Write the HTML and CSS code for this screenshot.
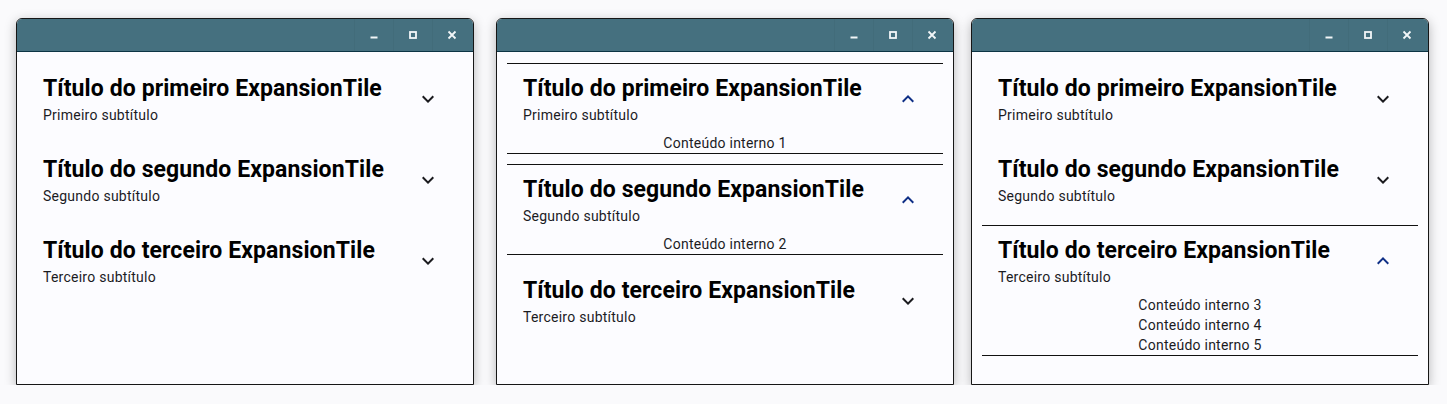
FILE: index.html
```html
<!DOCTYPE html>
<html>
<head>
    <title>ExpansionTile</title>
    <link rel="stylesheet" href="styles.css">
</head>
<body>
    <div class="desk">
        <!-- screen 1: all tiles closed -->
        <div class="window">
            <div class="titlebar">
                <span class="ctl"><svg viewBox="0 0 10 10"><path d="M1.5 7.5h7"/></svg></span>
                <span class="ctl"><svg viewBox="0 0 10 10"><rect x="2" y="2" width="6" height="6"/></svg></span>
                <span class="ctl"><svg viewBox="0 0 10 10"><path d="M1.5 1.5l7 7M8.5 1.5l-7 7"/></svg></span>
            </div>
            <div class="list">
                <div class="tile">
                    <div class="tile-head">
                        <div class="tile-text">
                            <p class="tile-title">Título do primeiro ExpansionTile</p>
                            <p class="tile-sub">Primeiro subtítulo</p>
                        </div>
                        <svg class="chev" viewBox="0 0 24 24"><path d="M16.59 8.59L12 13.17 7.41 8.59 6 10l6 6 6-6z"/></svg>
                    </div>
                </div>
                <div class="tile">
                    <div class="tile-head">
                        <div class="tile-text">
                            <p class="tile-title">Título do segundo ExpansionTile</p>
                            <p class="tile-sub">Segundo subtítulo</p>
                        </div>
                        <svg class="chev" viewBox="0 0 24 24"><path d="M16.59 8.59L12 13.17 7.41 8.59 6 10l6 6 6-6z"/></svg>
                    </div>
                </div>
                <div class="tile">
                    <div class="tile-head">
                        <div class="tile-text">
                            <p class="tile-title">Título do terceiro ExpansionTile</p>
                            <p class="tile-sub">Terceiro subtítulo</p>
                        </div>
                        <svg class="chev" viewBox="0 0 24 24"><path d="M16.59 8.59L12 13.17 7.41 8.59 6 10l6 6 6-6z"/></svg>
                    </div>
                </div>
            </div>
        </div>

        <!-- screen 2: first and second open -->
        <div class="window">
            <div class="titlebar">
                <span class="ctl"><svg viewBox="0 0 10 10"><path d="M1.5 7.5h7"/></svg></span>
                <span class="ctl"><svg viewBox="0 0 10 10"><rect x="2" y="2" width="6" height="6"/></svg></span>
                <span class="ctl"><svg viewBox="0 0 10 10"><path d="M1.5 1.5l7 7M8.5 1.5l-7 7"/></svg></span>
            </div>
            <div class="list">
                <div class="tile open">
                    <div class="tile-head">
                        <div class="tile-text">
                            <p class="tile-title">Título do primeiro ExpansionTile</p>
                            <p class="tile-sub">Primeiro subtítulo</p>
                        </div>
                        <svg class="chev" viewBox="0 0 24 24"><path d="M7.41 15.41L12 10.83l4.59 4.58L18 14l-6-6-6 6z"/></svg>
                    </div>
                    <div class="tile-body">
                        <p>Conteúdo interno 1</p>
                    </div>
                </div>
                <div class="tile open">
                    <div class="tile-head">
                        <div class="tile-text">
                            <p class="tile-title">Título do segundo ExpansionTile</p>
                            <p class="tile-sub">Segundo subtítulo</p>
                        </div>
                        <svg class="chev" viewBox="0 0 24 24"><path d="M7.41 15.41L12 10.83l4.59 4.58L18 14l-6-6-6 6z"/></svg>
                    </div>
                    <div class="tile-body">
                        <p>Conteúdo interno 2</p>
                    </div>
                </div>
                <div class="tile">
                    <div class="tile-head">
                        <div class="tile-text">
                            <p class="tile-title">Título do terceiro ExpansionTile</p>
                            <p class="tile-sub">Terceiro subtítulo</p>
                        </div>
                        <svg class="chev" viewBox="0 0 24 24"><path d="M16.59 8.59L12 13.17 7.41 8.59 6 10l6 6 6-6z"/></svg>
                    </div>
                </div>
            </div>
        </div>

        <!-- screen 3: third open -->
        <div class="window last">
            <div class="titlebar">
                <span class="ctl"><svg viewBox="0 0 10 10"><path d="M1.5 7.5h7"/></svg></span>
                <span class="ctl"><svg viewBox="0 0 10 10"><rect x="2" y="2" width="6" height="6"/></svg></span>
                <span class="ctl"><svg viewBox="0 0 10 10"><path d="M1.5 1.5l7 7M8.5 1.5l-7 7"/></svg></span>
            </div>
            <div class="list">
                <div class="tile">
                    <div class="tile-head">
                        <div class="tile-text">
                            <p class="tile-title">Título do primeiro ExpansionTile</p>
                            <p class="tile-sub">Primeiro subtítulo</p>
                        </div>
                        <svg class="chev" viewBox="0 0 24 24"><path d="M16.59 8.59L12 13.17 7.41 8.59 6 10l6 6 6-6z"/></svg>
                    </div>
                </div>
                <div class="tile">
                    <div class="tile-head">
                        <div class="tile-text">
                            <p class="tile-title">Título do segundo ExpansionTile</p>
                            <p class="tile-sub">Segundo subtítulo</p>
                        </div>
                        <svg class="chev" viewBox="0 0 24 24"><path d="M16.59 8.59L12 13.17 7.41 8.59 6 10l6 6 6-6z"/></svg>
                    </div>
                </div>
                <div class="tile open">
                    <div class="tile-head">
                        <div class="tile-text">
                            <p class="tile-title">Título do terceiro ExpansionTile</p>
                            <p class="tile-sub">Terceiro subtítulo</p>
                        </div>
                        <svg class="chev" viewBox="0 0 24 24"><path d="M7.41 15.41L12 10.83l4.59 4.58L18 14l-6-6-6 6z"/></svg>
                    </div>
                    <div class="tile-body">
                        <p>Conteúdo interno 3</p>
                        <p>Conteúdo interno 4</p>
                        <p>Conteúdo interno 5</p>
                    </div>
                </div>
            </div>
        </div>
    </div>
</body>
</html>
```

FILE: styles.css
```css
/* Page */
body {
    margin: 0;
    padding: 0;
    background: #fafafc;
    font-family: Roboto, "Noto Sans", sans-serif;
}

p {
    margin: 0;
}

/* The three screenshots side by side */
.desk {
    display: flex;
    padding: 18px 0 0 16px;
}

.window {
    flex-shrink: 0;
    width: 458px;
    height: 367px;
    box-sizing: border-box;
    border: 1px solid #161616;
    border-radius: 6px 6px 0 0;
    background: #fcfcff;
    margin-right: 22px;
    box-shadow: 0 3px 12px rgba(0, 0, 0, 0.28);
    overflow: hidden;
}

.window.last {
    margin-left: -5px;
}

/* Window title bar */
.titlebar {
    height: 32px;
    background: #45707f;
    border-bottom: 1px solid #0c3444;
    display: flex;
    justify-content: flex-end;
    padding-right: 2px;
}

.ctl {
    width: 38px;
    display: flex;
    align-items: center;
    justify-content: center;
    border-left: 1px solid rgba(0, 0, 0, 0.035);
}

.ctl svg {
    width: 10px;
    height: 10px;
    fill: none;
    stroke: #f2f6f8;
    stroke-width: 1.8;
}

/* List of expansion tiles */
.list {
    display: flex;
    flex-direction: column;
    gap: 10px;
    padding: 11px 10px;
}

.tile {
    border-top: 1px solid transparent;
    border-bottom: 1px solid transparent;
}

.tile.open {
    border-color: #111;
}

.tile-head {
    display: flex;
    align-items: flex-start;
    height: 69px;
    box-sizing: border-box;
    padding: 13px 23px 0 16px;
}

.tile-text {
    flex: 1;
}

.tile-title {
    font-size: 23px;
    font-weight: bold;
    line-height: 24px;
    letter-spacing: 0.1px;
    color: #000;
}

.tile-sub {
    font-size: 14px;
    line-height: 20px;
    letter-spacing: 0.25px;
    margin-top: 4px;
    color: #1b1b1f;
}

.chev {
    align-self: center;
    margin-top: -13px;
    width: 24px;
    height: 24px;
    fill: #1b1b1f;
}

.tile.open .chev {
    fill: #0f2f86;
}

.tile-body p {
    font-size: 14px;
    line-height: 20px;
    letter-spacing: 0.25px;
    text-align: center;
    color: #1b1b1f;
}
```
